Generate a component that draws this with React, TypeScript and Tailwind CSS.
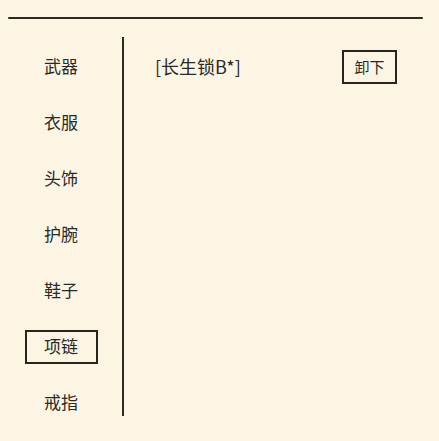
const slots = ["武器", "衣服", "头饰", "护腕", "鞋子", "项链", "戒指"];

export default function App() {
  const selected = "项链";

  return (
    <div
      className="w-[439px] h-[441px] bg-[#fcf5e4] text-[#2a2926] overflow-hidden"
      style={{ fontFamily: '"Noto Sans CJK SC", "Noto Sans", sans-serif' }}
    >
      {/* top rule */}
      <div className="pt-[17px] px-[8px]">
        <div className="h-[2px] w-[415px] bg-[#2a2926] rounded-full" />
      </div>

      <div className="flex mt-[18px]">
        {/* slot list */}
        <div className="w-[122px] flex flex-col items-center pt-[13px] gap-[22px]">
          {slots.map((s) => (
            <div
              key={s}
              className={
                "w-[73px] h-[34px] pb-[3px] flex items-center justify-center text-[17px] leading-none " +
                (s === selected ? "border-2 border-[#26251f]" : "border-2 border-transparent")
              }
            >
              {s}
            </div>
          ))}
        </div>

        {/* divider */}
        <div className="w-[2px] h-[379px] bg-[#2a2926]" />

        {/* equipped item */}
        <div className="flex-1 pl-[31px] pr-[42px] pt-[13px]">
          <div className="flex items-center justify-between">
            <span className="text-[18px] leading-none pb-[3px]">[长生锁B*]</span>
            <button className="w-[55px] h-[34px] pb-[2px] border-2 border-[#26251f] flex items-center justify-center text-[15px] leading-none">
              卸下
            </button>
          </div>
        </div>
      </div>
    </div>
  );
}
